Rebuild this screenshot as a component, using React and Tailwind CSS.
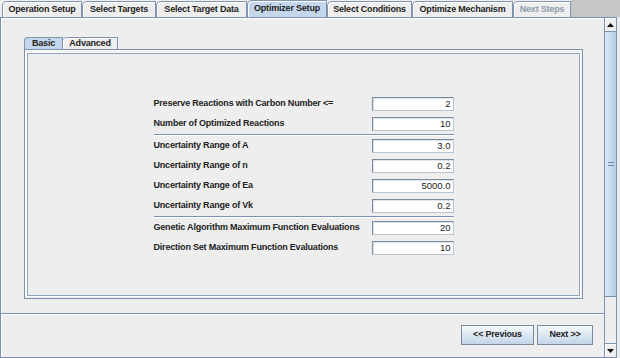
import React from 'react'

// Metal/Ocean look-alike: outer wizard tabs, inner Basic/Advanced tabs, form rows.

const TABS = [
  { label: 'Operation Setup', w: 'w-[80px]' },
  { label: 'Select Targets', w: 'w-[74px]' },
  { label: 'Select Target Data', w: 'w-[91px]' },
  { label: 'Optimizer Setup', w: 'w-[80px]', selected: true },
  { label: 'Select Conditions', w: 'w-[85px]' },
  { label: 'Optimize Mechanism', w: 'w-[101px]' },
  { label: 'Next Steps', w: 'w-[58px]', disabled: true },
]

const GROUPS = [
  [
    ['Preserve Reactions with Carbon Number <=', '2'],
    ['Number of Optimized Reactions', '10'],
  ],
  [
    ['Uncertainty Range of A', '3.0'],
    ['Uncertainty Range of n', '0.2'],
    ['Uncertainty Range of Ea', '5000.0'],
    ['Uncertainty Range of Vk', '0.2'],
  ],
  [
    ['Genetic Algorithm Maximum Function Evaluations', '20'],
    ['Direction Set Maximum Function Evaluations', '10'],
  ],
]

function Tab({ label, w, selected, disabled }) {
  return (
    <div
      className={
        'flex items-center justify-center rounded-tl-[5px] border border-b-0 border-[#8094b0] text-[9px] font-bold tracking-[-0.2px] shadow-[inset_1px_1px_0_#fff] ' +
        w +
        (selected
          ? ' h-[17px] bg-[#c4d7ec] text-[#222]'
          : ' h-[16px] bg-[#eeeeee]') +
        (disabled ? ' text-[#8e9bab]' : selected ? '' : ' text-[#222]')
      }
    >
      {label}
    </div>
  )
}

function Row({ label, value }) {
  return (
    <div className="flex h-[20px] items-center">
      <div className="w-[218px] text-[9px] font-bold tracking-[-0.2px] text-[#222]">{label}</div>
      <div className="flex h-[14px] w-[82px] items-center justify-end border border-[#7a8a99] border-b-[#b9c4cf] border-r-[#b9c4cf] bg-white pr-[2px] text-[9.5px] text-[#222] shadow-[inset_1px_1px_0_#dde3ea]">
        {value}
      </div>
    </div>
  )
}

function Sep() {
  return <div className="h-[2px] w-[300px] border-t border-[#7c91b1] bg-white" />
}

function Arrow({ up }) {
  return (
    <div className="flex h-[13px] items-center justify-center border-[#8094b0] bg-[#eeeeee] shadow-[inset_1px_1px_0_#fff]">
      <svg width="7" height="4" viewBox="0 0 7 4">
        <path d={up ? 'M0 4 L3.5 0 L7 4 Z' : 'M0 0 L3.5 4 L7 0 Z'} fill="#111" />
      </svg>
    </div>
  )
}

export default function App() {
  return (
    <div
      className="flex h-[358px] w-[620px] flex-col bg-[#eeeeee] text-[#222]"
      style={{ fontFamily: '"Liberation Sans", Arial, sans-serif' }}
    >
      {/* outer tab strip */}
      <div className="flex h-[17px] items-end">
        <div className="w-[2px]" />
        {TABS.map((t) => (
          <Tab key={t.label} {...t} />
        ))}
        <div className="h-[17px] flex-1 bg-[#c6c6c6]" />
      </div>

      <div className="flex flex-1 pr-[3px]">
        <div className="flex flex-1 border border-[#7c91b1] shadow-[inset_1px_1px_0_#fff]">
          {/* main panel */}
          <div className="flex flex-1 flex-col">
            <div className="flex flex-1 flex-col pb-[14px] pl-[23px] pr-[21px] pt-[19px]">
              <div className="flex h-[12px] items-end">
                <div className="flex h-[12px] w-[39px] items-center justify-center rounded-tl-[4px] border border-b-0 border-[#8094b0] bg-[#c4d7ec] text-[9px] font-bold tracking-[-0.2px]">
                  Basic
                </div>
                <div className="flex h-[12px] w-[55px] items-center justify-center rounded-tl-[4px] border border-b-0 border-l-0 border-[#8094b0] bg-[#eeeeee] text-[9px] font-bold tracking-[-0.2px] shadow-[inset_1px_1px_0_#fff]">
                  Advanced
                </div>
              </div>
              <div className="flex flex-1 border border-[#7c91b1] p-[2px] pt-[3px] shadow-[inset_1px_1px_0_#fff]">
                <div className="flex flex-1 flex-col items-center border border-[#8ea2be] pt-[40px] shadow-[0_0_0_1px_#fff]">
                  {GROUPS.map((g, i) => (
                    <React.Fragment key={i}>
                      {i > 0 && <Sep />}
                      {g.map(([l, v]) => (
                        <Row key={l} label={l} value={v} />
                      ))}
                    </React.Fragment>
                  ))}
                </div>
              </div>
            </div>

            <div className="h-[2px] border-t border-[#7c91b1] bg-white" />

            <div className="flex h-[42px] items-start justify-end gap-[3px] pr-[11px] pt-[10px]">
              <button className="h-[20px] w-[73px] border border-[#7a8a99] bg-gradient-to-b from-[#f6f9fc] to-[#c3d5ea] text-[9px] font-bold tracking-[-0.2px] text-[#222]">
                &lt;&lt; Previous
              </button>
              <button className="h-[20px] w-[56px] border border-[#7a8a99] bg-gradient-to-b from-[#f6f9fc] to-[#c3d5ea] text-[9px] font-bold tracking-[-0.2px] text-[#222]">
                Next &gt;&gt;
              </button>
            </div>
          </div>

          {/* scrollbar */}
          <div className="flex w-[12px] flex-col border-l border-[#7c91b1] bg-[#eeeeee]">
            <div className="border-b border-[#8094b0]">
              <Arrow up />
            </div>
            <div className="flex h-[265px] items-center justify-center border-b border-[#7c91b1] bg-gradient-to-r from-[#dbe8f5] via-[#c9dcef] to-[#b7cde4]">
              <div className="flex flex-col gap-[2px]">
                <div className="h-px w-[6px] bg-[#6e86a8]" />
                <div className="h-px w-[6px] bg-[#6e86a8]" />
              </div>
            </div>
            <div className="flex-1" />
            <div className="border-t border-[#8094b0]">
              <Arrow />
            </div>
          </div>
        </div>
      </div>
    </div>
  )
}
